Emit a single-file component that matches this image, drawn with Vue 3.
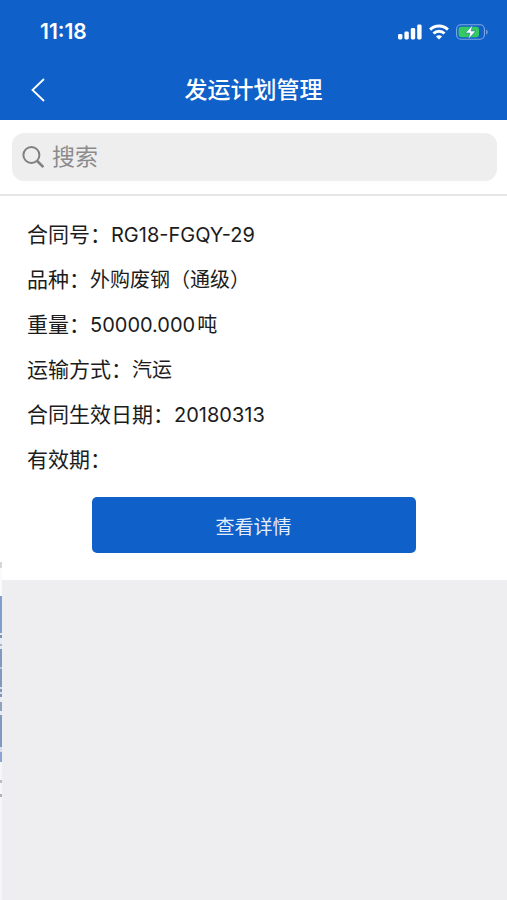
<script setup>
import { ref } from 'vue'

const keyword = ref('')
const fields = [
  { label: '合同号', value: 'RG18-FGQY-29' },
  { label: '品种', value: '外购废钢（通级）' },
  { label: '重量', value: '50000.000', unit: '吨' },
  { label: '运输方式', value: '汽运' },
  { label: '合同生效日期', value: '20180313' },
  { label: '有效期', value: '' },
]
</script>

<template>
  <div class="screen">
    <header class="top">
      <div class="status">
        <span class="clock">11:18</span>
        <div class="indicators">
          <svg class="signal" width="24" height="16" viewBox="0 0 24 16" fill="#fff" aria-hidden="true">
            <rect x="0" y="10" width="4.4" height="5.5" rx="1.4" />
            <rect x="6.4" y="7.5" width="4.4" height="8" rx="1.4" />
            <rect x="12.8" y="4" width="4.4" height="11.5" rx="1.4" />
            <rect x="19.2" y="0.5" width="4.4" height="15" rx="1.4" />
          </svg>
          <svg class="wifi" width="20" height="16" viewBox="0 0 20 16" fill="none" stroke="#fff" stroke-width="2.9" aria-hidden="true">
            <path d="M1.1 5.6a12.7 12.7 0 0 1 17.8 0" />
            <path d="M4.5 9.5a7.8 7.8 0 0 1 11 0" />
            <path d="M10 15.6 6.9 12.5a4.4 4.4 0 0 1 6.2 0z" fill="#fff" stroke="none" />
          </svg>
          <svg class="battery" width="33" height="16" viewBox="0 0 33 16" aria-hidden="true">
            <rect x="0.6" y="0.8" width="27.8" height="14.4" rx="4.2" fill="none" stroke="#7fa9e3" stroke-width="1.1" />
            <rect x="2.6" y="2.8" width="20.4" height="10.4" rx="2.4" fill="#35c95f" />
            <path d="M30.2 5.4c1.9.7 1.9 4.5 0 5.2z" fill="#7fa9e3" />
            <path d="M16.6 1 9.4 9h4.5L12.3 15.2 19.7 7h-4.6z" fill="#fff" stroke="#0f60c8" stroke-width="0.5" />
          </svg>
        </div>
      </div>
      <nav class="bar">
        <button class="back" type="button" aria-label="返回">
          <svg width="14" height="24" viewBox="0 0 14 24" fill="none" stroke="#fff" stroke-width="1.8" aria-hidden="true">
            <path d="M13 1 1.5 12 13 23" />
          </svg>
        </button>
        <h1>发运计划管理</h1>
      </nav>
    </header>

    <form class="search" @submit.prevent>
      <label class="box">
        <svg width="24" height="24" viewBox="0 0 24 24" fill="none" stroke="#808082" aria-hidden="true">
          <circle cx="9.4" cy="10" r="8" stroke-width="2" />
          <path d="m15.2 16 6.2 6.2" stroke-width="2.6" />
        </svg>
        <input v-model="keyword" type="text" placeholder="搜索" aria-label="搜索" />
      </label>
    </form>

    <main>
      <article class="card">
        <dl>
          <div v-for="f in fields" :key="f.label" class="row">
            <dt>{{ f.label }}：</dt>
            <dd>{{ f.value }}<span v-if="f.unit" class="unit">{{ f.unit }}</span></dd>
          </div>
        </dl>
        <button class="detail" type="button">查看详情</button>
      </article>
    </main>
    <div class="peek" aria-hidden="true"></div>
  </div>
</template>

<style>
body {
  background: #eeeef0;
}
</style>

<style scoped>
.screen {
  position: relative;
  min-height: 100vh;
  background: #eeeef0;
  font-family: Inter, "Noto Sans CJK SC", sans-serif;
  color: #1c1c1c;
}
.top {
  background: #0f60c8;
  color: #fff;
}
.status {
  display: flex;
  align-items: center;
  justify-content: space-between;
  height: 60px;
  padding: 4px 18px 0 40px;
  box-sizing: border-box;
}
.clock {
  font-size: 21px;
  font-weight: 600;
  line-height: 24px;
}
.indicators {
  display: flex;
  align-items: center;
  gap: 7px;
}
.bar {
  display: grid;
  grid-template-columns: 76px 1fr 76px;
  align-items: center;
  height: 60px;
}
.back {
  display: flex;
  justify-content: center;
  padding: 0;
  border: 0;
  background: none;
}
h1 {
  margin: 0;
  font-size: 23px;
  font-weight: 500;
  line-height: 32px;
  text-align: center;
}
.search {
  padding: 13px 10px 13px 12px;
  background: #fff;
  border-bottom: 2px solid #e6e6e6;
}
.box {
  display: flex;
  align-items: center;
  gap: 6px;
  height: 48px;
  padding: 0 10px;
  border-radius: 12px;
  background: #eee;
}
.box svg {
  flex: none;
}
.box input {
  flex: 1;
  min-width: 0;
  padding: 0;
  border: 0;
  outline: 0;
  background: none;
  font: inherit;
  font-size: 23px;
  line-height: 32px;
}
.box input::placeholder {
  color: #8b8b8d;
  opacity: 1;
}
.card {
  display: flex;
  flex-direction: column;
  align-items: center;
  padding: 23px 27px 27px;
  background: #fff;
}
dl {
  display: grid;
  gap: 13px;
  width: 100%;
  margin: 0 0 21px;
}
.row {
  display: flex;
  align-items: baseline;
  font-size: 21px;
  line-height: 32px;
  height: 32px;
}
dt,
dd {
  margin: 0;
}
dd {
  font-size: 20px;
}
.unit {
  margin-left: 2px;
}
.detail {
  width: 64%;
  min-width: 324px;
  height: 56px;
  border: 0;
  border-radius: 5px;
  background: #0f60c8;
  color: #e4eefb;
  font: inherit;
  font-size: 19px;
}
/* Sliver of the previous page still visible at the left edge */
.peek {
  position: absolute;
  left: 0;
  top: 562px;
  width: 2px;
  height: 338px;
  background: linear-gradient(
    #d5d7da 0 6px,
    #fafafc 6px 34px,
    #7f9ecb 34px 71px,
    #e3ebf5 71px 73px,
    #7f93b3 73px 76px,
    #e3ebf5 76px 82px,
    #a5b6cf 82px 84px,
    #e3ebf5 84px 87px,
    #7f9ac0 87px 105px,
    #b5c5dc 105px 107px,
    #7f9ac0 107px 125px,
    #d5deea 125px 127px,
    #8297b6 127px 130px,
    #d5deea 130px 132px,
    #8297b6 132px 135px,
    #e6edf6 135px 140px,
    #8fa3c0 140px 149px,
    #e6edf6 149px 153px,
    #7f9ac0 153px 185px,
    #d5dff0 185px 190px,
    #8ba5d0 190px 200px,
    #f5f6f9 200px 218px,
    #b9bcc4 218px 221px,
    #f5f6f9 221px 232px,
    #b0b3bb 232px 235px,
    #f5f6f9 235px
  );
}
</style>
